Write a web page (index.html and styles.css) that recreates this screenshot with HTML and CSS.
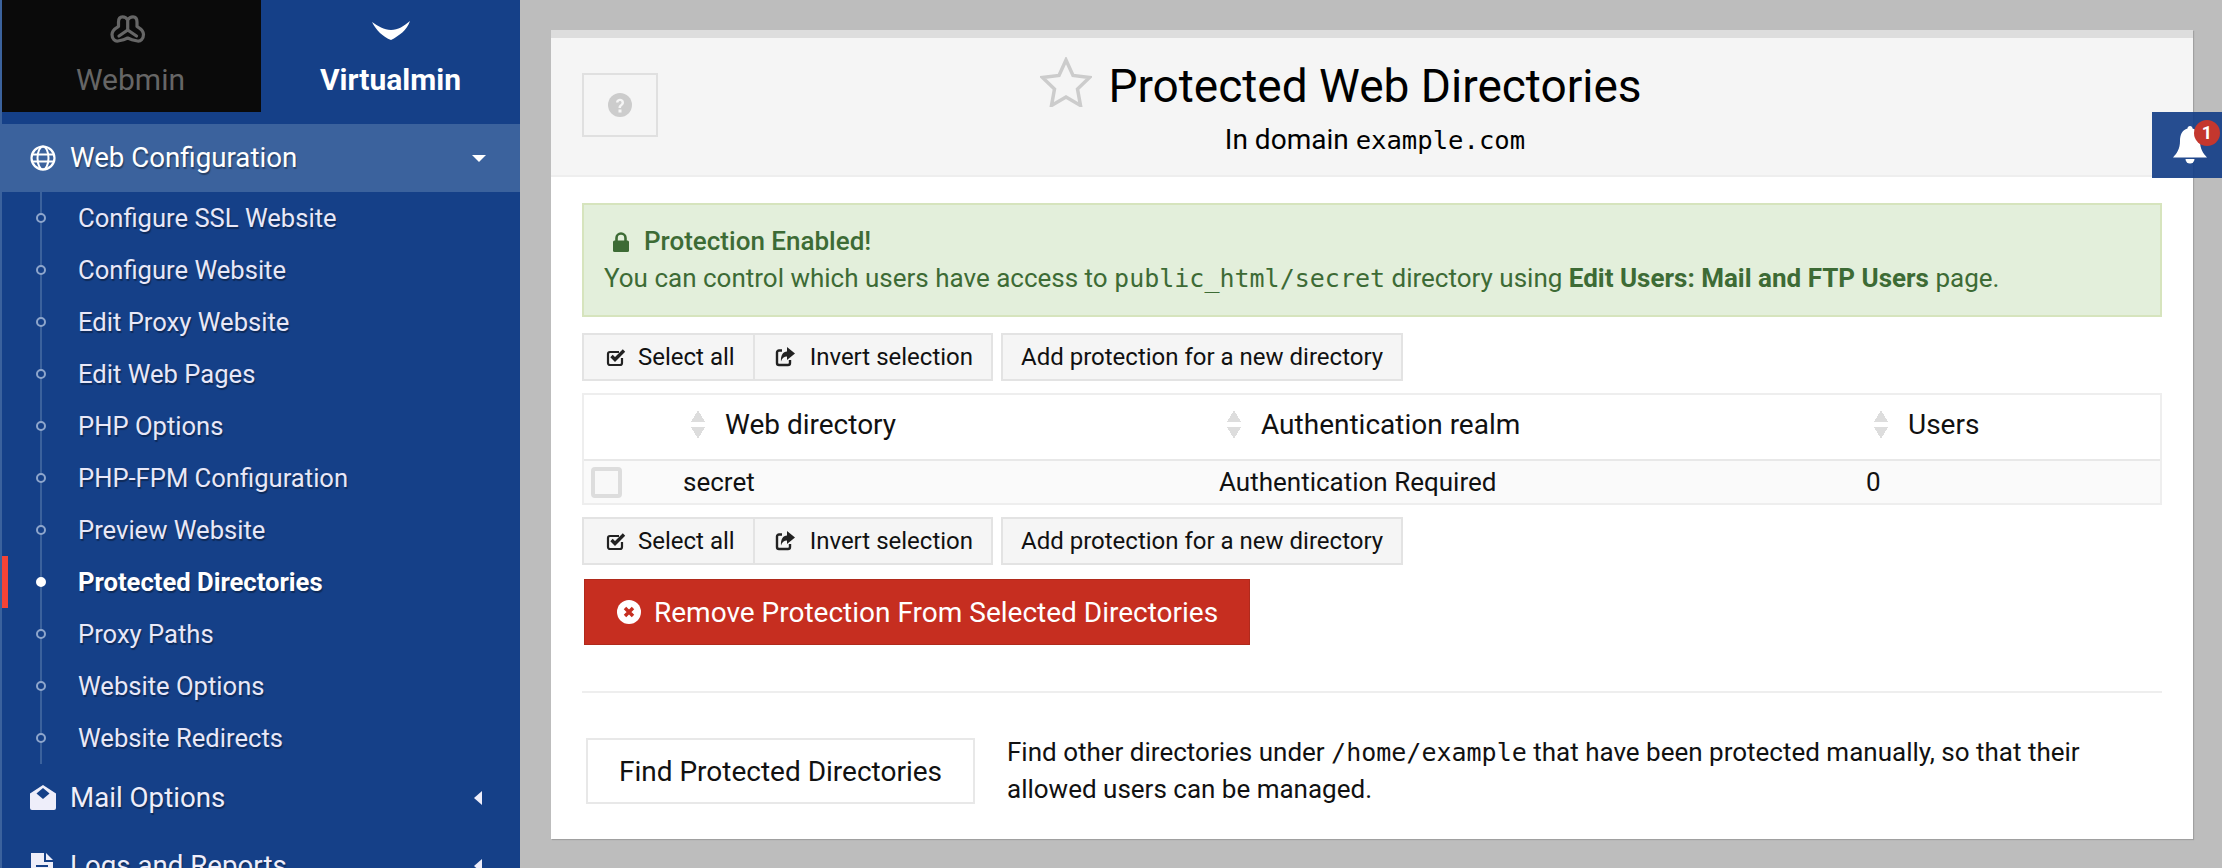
FILE: index.html
```html
<!DOCTYPE html>
<html lang="en">
<head>
    <meta charset="UTF-8">
    <title>Protected Web Directories</title>
    <link rel="stylesheet" href="styles.css">
</head>
<body>

    <aside class="sidebar">
        <div class="switch">
            <div class="switch-tab webmin">
                <svg class="switch-icon webmin-icon" width="36" height="30" viewBox="0 0 36 30"><path d="M17.700 5C16 2 14 1.800 12.500 1.800 9.500 1.800 8.500 4 8.500 7v4.500C6 13 2 15 2 19.500 2 24 5 26.500 8 26c3-.5 7-1.500 9.700-3 2.800 1.500 6.800 2.500 9.800 3 3 .5 6-2 6-6.500 0-4.500-4-6.500-6.500-8V7c0-3-1-5.200-4-5.200-1.500 0-3.500.2-5.300 3.200v10M17.700 15L9 21M17.700 15l8.800 6" fill="none" stroke="#666" stroke-width="3.200" stroke-linejoin="round" stroke-linecap="round"/></svg>
                <span class="webmin-name">Webmin</span>
            </div>
            <div class="switch-tab virtualmin">
                <svg class="switch-icon" width="38" height="20" viewBox="0 0 38 20"><path d="M0 1c6 4 12 8 19 8S32 5 38 0c-3 9-11 15-19 19C11 16 4 9 0 1z" fill="#fff"/></svg>
                <span>Virtualmin</span>
            </div>
        </div>

        <nav class="menu">
            <div class="menu-head open">
                <svg class="menu-icon" viewBox="0 0 26 26"><circle cx="13" cy="13" r="11.500" fill="none" stroke="#fff" stroke-width="2.200"/><ellipse cx="13" cy="13" rx="5.500" ry="11.500" fill="none" stroke="#fff" stroke-width="2"/><path d="M2 9.500h22M2 16.500h22" stroke="#fff" stroke-width="2"/></svg>
                <span class="menu-label">Web Configuration</span>
                <i class="caret-down"></i>
            </div>
            <ul class="submenu">
                <li>Configure SSL Website</li>
                <li>Configure Website</li>
                <li>Edit Proxy Website</li>
                <li>Edit Web Pages</li>
                <li>PHP Options</li>
                <li>PHP-FPM Configuration</li>
                <li>Preview Website</li>
                <li class="current">Protected Directories</li>
                <li>Proxy Paths</li>
                <li>Website Options</li>
                <li>Website Redirects</li>
            </ul>
            <div class="menu-head">
                <svg class="menu-icon" viewBox="0 0 26 26"><path d="M13 0L26 8.500V23a2 2 0 0 1-2 2H2a2 2 0 0 1-2-2V8.500z" fill="#eeeefa"/><path d="M13 3l6.500 5.500L13 14 6.500 8.500z" fill="#154088"/></svg>
                <span class="menu-label">Mail Options</span>
                <i class="caret-left"></i>
            </div>
            <div class="menu-head">
                <svg class="menu-icon" viewBox="0 0 26 26"><path d="M1 0h13v9h9v17H1z" fill="#eeeefa"/><path d="M16 0l7 7h-7z" fill="#eeeefa"/><path d="M6 13h12M6 17h12M6 21h12" stroke="#154088" stroke-width="2"/></svg>
                <span class="menu-label">Logs and Reports</span>
                <i class="caret-left"></i>
            </div>
        </nav>
    </aside>

    <main class="main">
        <section class="panel">
            <header class="panel-head">
                <div class="head-left">
                    <div class="help-btn">
                        <svg width="24" height="24" viewBox="0 0 24 24"><circle cx="12" cy="12" r="12" fill="#ccc"/><path d="M8 9.500c0-5 8-5 8 0 0 3-3 3-3 5.500h-2.500c0-3.500 3-3.500 3-5.500 0-2-3-2-3 0z" fill="#f5f5f5"/><rect x="10.500" y="16.500" width="3" height="3" fill="#f5f5f5"/></svg>
                    </div>
                </div>
                <div class="head-center">
                    <h1 class="title">
                        <svg class="star" width="52" height="50" viewBox="0 0 52 50"><path d="M26 3l7 15.500 16.500 2-12 11.500 3 16.500L26 40l-14.500 8.500 3-16.500L2.500 20.500l16.500-2z" fill="none" stroke="#ccc" stroke-width="3.500" stroke-linejoin="miter"/></svg>
                        <span>Protected Web Directories</span>
                    </h1>
                    <div class="subtitle">In domain <code>example.com</code></div>
                </div>
                <div class="head-right"></div>
            </header>

            <div class="panel-body">
                <div class="alert">
                    <div class="alert-title">
                        <svg width="18" height="20" viewBox="0 0 18 20"><path d="M4.500 9V6a4.500 4.500 0 0 1 9 0v3" fill="none" stroke="#3d6b35" stroke-width="2.600"/><rect x="1" y="8.500" width="16" height="11.500" rx="1.500" fill="#3d6b35"/></svg>
                        <b>Protection Enabled!</b>
                    </div>
                    <div>You can control which users have access to <code>public_html/secret</code> directory using <b>Edit Users: Mail and FTP Users</b> page.</div>
                </div>

                <div class="toolbar">
                    <div class="btn-group">
                        <div class="btn btn-tool">
                            <svg class="btn-icon" viewBox="0 0 20 20"><path d="M16 11v5a2 2 0 0 1-2 2H4a2 2 0 0 1-2-2V7a2 2 0 0 1 2-2h9" fill="none" stroke="#222" stroke-width="2.200"/><path d="M5.500 9l3.500 3.500L18 3.500" fill="none" stroke="#222" stroke-width="3.400"/></svg>
                            Select all
                        </div>
                        <div class="btn btn-tool">
                            <svg class="btn-icon" viewBox="0 0 20 20"><path d="M7 3.500H4a2 2 0 0 0-2 2V16a2 2 0 0 0 2 2h9a2 2 0 0 0 2-2v-3" fill="none" stroke="#222" stroke-width="2.400"/><path d="M12 0l8 6.500-8 6.500V9.500C9 9.500 7 11 6 14.500c-.5-6 2-10 6-10z" fill="#222"/></svg>
                            Invert selection
                        </div>
                    </div>
                    <div class="btn">Add protection for a new directory</div>
                </div>

                <table class="dir-table">
                    <thead>
                        <tr>
                            <th class="col-check"></th>
                            <th class="col-dir"><span class="th-in"><i class="sort"></i>Web directory</span></th>
                            <th class="col-realm"><span class="th-in"><i class="sort"></i>Authentication realm</span></th>
                            <th><span class="th-in"><i class="sort"></i>Users</span></th>
                        </tr>
                    </thead>
                    <tbody>
                        <tr>
                            <td class="cell-check"><span class="checkbox"></span></td>
                            <td>secret</td>
                            <td>Authentication Required</td>
                            <td>0</td>
                        </tr>
                    </tbody>
                </table>

                <div class="toolbar toolbar-low">
                    <div class="btn-group">
                        <div class="btn btn-tool">
                            <svg class="btn-icon" viewBox="0 0 20 20"><path d="M16 11v5a2 2 0 0 1-2 2H4a2 2 0 0 1-2-2V7a2 2 0 0 1 2-2h9" fill="none" stroke="#222" stroke-width="2.200"/><path d="M5.500 9l3.500 3.500L18 3.500" fill="none" stroke="#222" stroke-width="3.400"/></svg>
                            Select all
                        </div>
                        <div class="btn btn-tool">
                            <svg class="btn-icon" viewBox="0 0 20 20"><path d="M7 3.500H4a2 2 0 0 0-2 2V16a2 2 0 0 0 2 2h9a2 2 0 0 0 2-2v-3" fill="none" stroke="#222" stroke-width="2.400"/><path d="M12 0l8 6.500-8 6.500V9.500C9 9.500 7 11 6 14.500c-.5-6 2-10 6-10z" fill="#222"/></svg>
                            Invert selection
                        </div>
                    </div>
                    <div class="btn">Add protection for a new directory</div>
                </div>

                <div class="btn-danger">
                    <svg width="24" height="24" viewBox="0 0 24 24"><circle cx="12" cy="12" r="12" fill="#fff"/><path d="M8 8l8 8M16 8l-8 8" stroke="#c62e20" stroke-width="3.500"/></svg>
                    Remove Protection From Selected Directories
                </div>

                <hr class="divider">

                <div class="find-row">
                    <div class="btn-find">Find Protected Directories</div>
                    <p class="find-text">Find other directories under <code>/home/example</code> that have been protected manually, so that their allowed users can be managed.</p>
                </div>
            </div>
        </section>

        <div class="notify">
            <svg width="34" height="38" viewBox="0 0 34 38"><path d="M17 0c1.500 0 2.500 1 2.500 2.500C25 4 27 9 27 15c0 8 3 12 7 16.500H0C4 27 7 23 7 15 7 9 9 4 14.500 2.500 14.500 1 15.500 0 17 0z" fill="#fff"/><path d="M12.500 33a4.500 4.500 0 0 0 9 0z" fill="#fff"/></svg>
            <span class="badge">1</span>
        </div>
    </main>

</body>
</html>
```

FILE: styles.css
```css
body {
    font-family: 'Roboto', 'Liberation Sans', sans-serif;
    font-size: 26px;
    margin: 0;
    padding: 0;
    width: 2222px;
    height: 868px;
    overflow: hidden;
    display: flex;
    background-color: #bdbdbd;
    color: #111;
}
code {
    font-family: 'DejaVu Sans Mono', monospace;
    font-size: 25px;
}

/* sidebar */
.sidebar {
    width: 518px;
    height: 868px;
    flex-shrink: 0;
    background: #154088;
    border-left: 2px solid #3b629d;
    overflow: hidden;
}
.switch {
    display: flex;
    height: 112px;
    margin-bottom: 12px;
}
.switch-tab {
    width: 259px;
    display: flex;
    flex-direction: column;
    align-items: center;
    font-size: 30px;
}
.switch-icon {
    height: 34px;
    margin-top: 14px;
    margin-bottom: 14px;
}
.webmin-icon {
    height: 30px;
    margin-top: 15px;
    margin-bottom: 17px;
    margin-right: 8px;
}
.webmin-name {
    margin-right: 2px;
}
.webmin {
    background: #0a0a0a;
    color: #666;
}
.virtualmin {
    color: #fff;
    font-weight: 700;
}
.menu-head {
    display: flex;
    align-items: center;
    height: 68px;
    padding-left: 28px;
    color: #eeeefa;
    font-size: 27.700px;
    text-shadow: 1px 2px 1px rgba(0, 0, 0, 0.35);
}
.menu-label {
    flex: 1;
    margin-top: -2px;
}
.menu-head.open {
    background: #3b629d;
    color: #fff;
}
.menu-icon {
    width: 26px;
    height: 26px;
    margin-right: 14px;
}
.caret-down {
    width: 0;
    height: 0;
    margin-right: 34px;
    border-left: 7px solid transparent;
    border-right: 7px solid transparent;
    border-top: 7px solid #fff;
}
.caret-left {
    width: 0;
    height: 0;
    margin-right: 38px;
    border-top: 7px solid transparent;
    border-bottom: 7px solid transparent;
    border-right: 8px solid #eeeefa;
}
.submenu {
    list-style: none;
    margin: 0;
    padding: 0;
    position: relative;
}
.submenu::before {
    content: "";
    position: absolute;
    left: 38px;
    top: 0;
    bottom: 0;
    width: 2px;
    background: #3b629d;
}
.submenu li {
    position: relative;
    height: 52px;
    line-height: 52px;
    padding-left: 76px;
    color: #e8e8f8;
    font-size: 25.600px;
    text-shadow: 1px 2px 1px rgba(0, 0, 0, 0.35);
}
.submenu li::before {
    content: "";
    position: absolute;
    left: 34px;
    top: 21px;
    width: 6px;
    height: 6px;
    border: 2px solid #8ea6cc;
    border-radius: 50%;
    background: #154088;
}
.submenu li.current {
    color: #fff;
    font-weight: 700;
}
.submenu li.current::before {
    background: #fff;
    border-color: #fff;
}
.submenu li.current::after {
    content: "";
    position: absolute;
    left: -2px;
    top: 0;
    width: 8px;
    height: 52px;
    background: #f44336;
}

/* main panel */
.main {
    flex: 1;
    padding: 30px 0 0 31px;
}
.panel {
    width: 1642px;
    height: 809px;
    background: #fff;
    box-shadow: 1px 1px 1px rgba(0, 0, 0, 0.15);
}
.panel-head {
    display: grid;
    grid-template-columns: 1fr auto 1fr;
    height: 137px;
    background: #f5f5f5;
    border-top: 8px solid #ddd;
    border-bottom: 2px solid #eee;
}
.head-left {
    padding: 35px 0 0 31px;
}
.help-btn {
    width: 76px;
    height: 64px;
    box-sizing: border-box;
    border: 2px solid #e0e0e0;
    display: flex;
    align-items: center;
    justify-content: center;
}
.head-center {
    display: flex;
    flex-direction: column;
    align-items: center;
    padding: 18px 0 0 6px;
}
.title {
    display: flex;
    align-items: center;
    margin: 0;
    height: 60px;
    font-size: 46px;
    font-weight: 400;
    color: #000;
}
.star {
    margin-left: -68px;
    margin-right: 16px;
    margin-top: -8px;
}
.subtitle {
    margin-top: 5px;
    line-height: 38px;
    font-size: 28px;
    color: #000;
}
.subtitle code {
    font-size: 25.600px;
}
.panel-body {
    padding: 26px 31px 0;
}
.alert {
    height: 114px;
    box-sizing: border-box;
    padding: 18px 20px 0;
    line-height: 37px;
    background: #e3efdb;
    border: 2px solid #d6e4bd;
    color: #3d6b35;
}
.alert-title {
    display: flex;
    align-items: center;
    gap: 14px;
    padding-left: 8px;
}
.alert b {
    font-weight: 700;
}
.alert-title b {
    font-weight: 500;
}
.toolbar {
    display: flex;
    gap: 8px;
    margin-top: 16px;
}
.toolbar-low {
    margin-top: 12px;
}
.btn-group {
    display: flex;
}
.btn {
    display: flex;
    align-items: center;
    height: 48px;
    box-sizing: border-box;
    padding: 0 18px;
    background: #f5f5f5;
    border: 2px solid #e3e3e3;
    font-size: 24px;
    color: #111;
}
.btn-tool {
    padding-left: 22px;
}
.btn-tool + .btn-tool {
    border-left: 0;
    padding-left: 20px;
    padding-right: 18px;
}
.btn-icon {
    width: 20px;
    height: 20px;
    margin-right: 12px;
}
.btn-tool + .btn-tool .btn-icon {
    margin-right: 15px;
}
.dir-table {
    width: 100%;
    margin-top: 12px;
    border-collapse: separate;
    border-spacing: 0;
    table-layout: fixed;
    border: 2px solid #eee;
}
.dir-table th {
    box-sizing: border-box;
    height: 66px;
    padding: 0 0 5px 16px;
    font-weight: 400;
    font-size: 28px;
    text-align: left;
    color: #111;
    border-bottom: 2px solid #e8e8e8;
}
.th-in {
    display: flex;
    align-items: center;
    gap: 20px;
}
.dir-table td {
    box-sizing: border-box;
    height: 42px;
    padding: 0 0 0 8px;
    background: #fafafa;
}
.dir-table .cell-check {
    padding-left: 7px;
}
.col-check {
    width: 91px;
}
.col-dir {
    width: 536px;
}
.col-realm {
    width: 647px;
}
.sort {
    display: block;
    width: 14px;
    height: 29px;
    background:
        linear-gradient(to bottom right, transparent 50%, #ddd 50%) left top / 7px 12px no-repeat,
        linear-gradient(to bottom left, transparent 50%, #ddd 50%) right top / 7px 12px no-repeat,
        linear-gradient(to top right, transparent 50%, #ddd 50%) left bottom / 7px 12px no-repeat,
        linear-gradient(to top left, transparent 50%, #ddd 50%) right bottom / 7px 12px no-repeat;
}
.checkbox {
    display: block;
    width: 31px;
    height: 31px;
    box-sizing: border-box;
    background: #f8f8f8;
    border: 4px solid #ddd;
    border-radius: 4px;
}
.btn-danger {
    display: flex;
    align-items: center;
    gap: 13px;
    width: 666px;
    height: 66px;
    box-sizing: border-box;
    margin: 14px 0 0 2px;
    padding-left: 32px;
    background: #c62e20;
    border: 1px solid #b02a1c;
    color: #fff;
    font-size: 28px;
}
.divider {
    margin: 46px 0 41px;
    height: 2px;
    border: 0;
    background: #eee;
}
.find-row {
    display: flex;
    align-items: center;
    gap: 32px;
    padding-left: 4px;
}
.btn-find {
    flex-shrink: 0;
    width: 389px;
    height: 66px;
    box-sizing: border-box;
    display: flex;
    align-items: center;
    justify-content: center;
    border: 2px solid #e8e8e8;
    font-size: 28px;
}
.find-text {
    margin: 0;
    line-height: 37px;
}

/* notification tab on the right edge */
.notify {
    position: absolute;
    left: 2152px;
    top: 112px;
    width: 70px;
    height: 66px;
    background: rgba(21, 64, 136, 0.93);
}
.notify svg {
    position: absolute;
    left: 21px;
    top: 14px;
}
.badge {
    position: absolute;
    left: 42px;
    top: 8px;
    width: 26px;
    height: 26px;
    border-radius: 50%;
    background: #c4372e;
    color: #fff;
    font-size: 18px;
    font-weight: 700;
    line-height: 26px;
    text-align: center;
}
```
